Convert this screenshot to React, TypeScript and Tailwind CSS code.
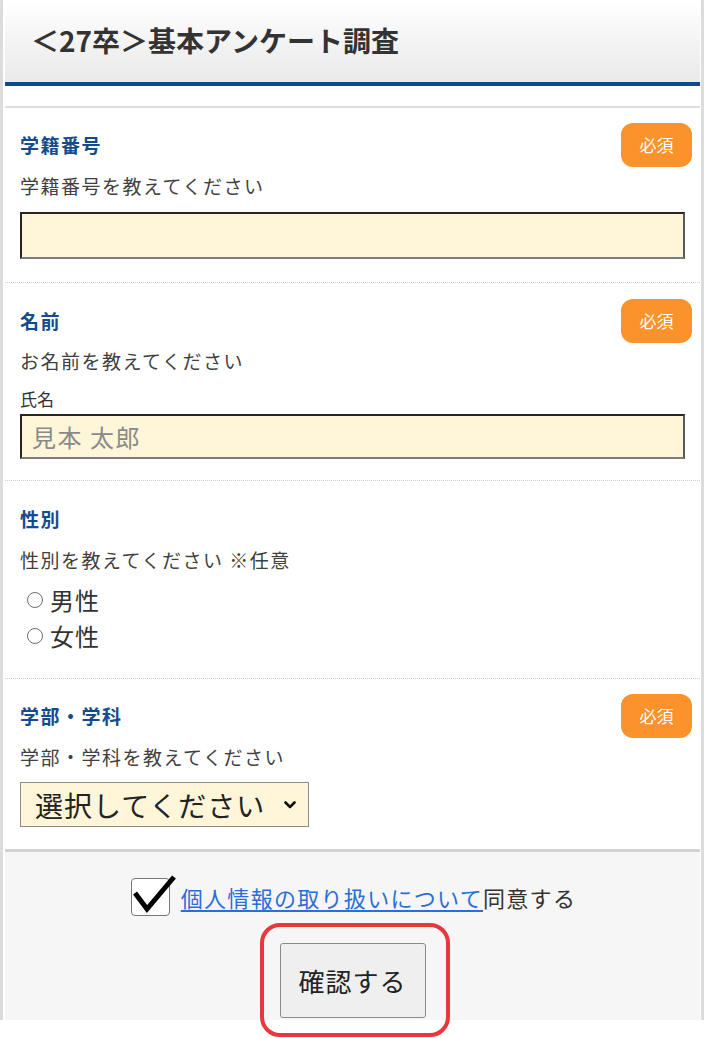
import React from "react";

const Badge = () => (
  <span className="flex h-[44px] w-[71px] items-center justify-center rounded-[12px] bg-[#fb922b] text-[17px] text-white">
    必須
  </span>
);

const Label = ({ children }: { children: React.ReactNode }) => (
  <span className="text-[19px] font-bold leading-[28px] tracking-[1.5px] text-[#134b8c]">{children}</span>
);

const Desc = ({ children, className = "" }: { children: React.ReactNode; className?: string }) => (
  <div className={`text-[19px] leading-[28px] tracking-[1.5px] text-[#404040] ${className}`}>{children}</div>
);

const Radio = ({ label }: { label: string }) => (
  <div className="flex h-[36px] items-center pl-[7px]">
    <span className="mr-[7px] h-[16px] w-[16px] rounded-full border-[1.5px] border-[#6f6f6f] bg-white" />
    <span className="text-[24px] leading-[36px] tracking-[1px] text-[#333]">{label}</span>
  </div>
);

export default function App() {
  return (
    <div className="relative h-[1038px] w-[708px] overflow-hidden bg-white font-['Noto_Sans_CJK_JP','Noto_Sans',sans-serif]">
      <div className="w-[704px] border-x-[3px] border-[#dcdcdc] pl-[2px] pr-[1px]">
        {/* header */}
        <div className="flex h-[82px] items-center bg-gradient-to-b from-[#ffffff] to-[#e9e9e9] pl-[26px] pb-[3px]">
          <h1 className="text-[28px] font-bold tracking-[0px] text-[#333]">＜27卒＞基本アンケート調査</h1>
        </div>
        <div className="h-[4px] bg-[#0b4a8f]" />
        <div className="h-[20px]" />

        {/* section 1 */}
        <div className="border-t-2 border-b border-t-[#dddddd] border-b-[#cfcfcf] border-dotted pl-[15px] pr-[8px] pt-[15px] pb-[23px]" style={{ borderTopStyle: "solid" }}>
          <div className="flex h-[44px] items-center justify-between">
            <Label>学籍番号</Label>
            <Badge />
          </div>
          <Desc className="mt-[5px]">学籍番号を教えてください</Desc>
          <div className="mt-[12px] h-[47px] w-[665px] border-2 border-t-[#262626] border-l-[#262626] border-b-[#7c7c7c] border-r-[#5a5a5a] bg-[#fff5d9]" />
        </div>

        {/* section 2 */}
        <div className="border-b border-dotted border-[#cfcfcf] pl-[15px] pr-[8px] pt-[16px] pb-[21px]">
          <div className="flex h-[44px] items-center justify-between">
            <Label>名前</Label>
            <Badge />
          </div>
          <Desc className="mt-[4px]">お名前を教えてください</Desc>
          <div className="mt-[12px] text-[17px] leading-[24px] text-[#333]">氏名</div>
          <div className="mt-[3px] flex h-[45px] w-[665px] items-center border-2 border-t-[#262626] border-l-[#262626] border-b-[#7c7c7c] border-r-[#5a5a5a] bg-[#fff5d9] pl-[10px]">
            <span className="text-[24px] tracking-[1.5px] text-[#8a8a8a]">見本 太郎</span>
          </div>
        </div>

        {/* section 3 */}
        <div className="border-b border-dotted border-[#cfcfcf] pl-[15px] pr-[8px] pt-[16px] pb-[24px]">
          <div className="flex h-[44px] items-center">
            <Label>性別</Label>
          </div>
          <Desc className="mt-[5px]">性別を教えてください ※任意</Desc>
          <div className="mt-[8px]">
            <Radio label="男性" />
            <Radio label="女性" />
          </div>
        </div>

        {/* section 4 */}
        <div className="border-b-[3px] border-[#d2d2d2] pl-[15px] pr-[8px] pt-[15px] pb-[22px]">
          <div className="flex h-[44px] items-center justify-between">
            <Label>学部・学科</Label>
            <Badge />
          </div>
          <Desc className="mt-[5px]">学部・学科を教えてください</Desc>
          <div className="mt-[11px] flex h-[45px] w-[289px] items-center border border-[#8c8c8c] bg-[#fff5d9] pl-[14px] pr-[12px]">
            <span className="text-[28px] leading-[40px] tracking-[1px] text-[#222]">選択してください</span>
            <svg className="ml-auto" width="12" height="8" viewBox="0 0 12 8">
              <path d="M1.5 1.5 L6 6 L10.5 1.5" fill="none" stroke="#111" strokeWidth="2.6" strokeLinecap="round" strokeLinejoin="round" />
            </svg>
          </div>
        </div>

        {/* footer */}
        <div className="bg-[#f6f6f6] pt-[26px] pb-[2px]">
          <div className="flex h-[38px] items-center justify-center pl-[2px]">
            <span className="relative mr-[11px] h-[38px] w-[39px] rounded-[4px] border-[1.5px] border-[#777] bg-white">
              <svg className="absolute left-[0px] top-[-5px]" width="46" height="40" viewBox="0 0 46 40">
                <path d="M3 19 L15 35 L42 3" fill="none" stroke="#000" strokeWidth="5" strokeLinejoin="miter" />
              </svg>
            </span>
            <span className="text-[22px] leading-[30px] tracking-[1.3px] text-[#333]">
              <span className="text-[#2a6fd8] underline decoration-[1.5px] underline-offset-[3px]">個人情報の取り扱いについて</span>同意する
            </span>
          </div>
          <div className="mt-[27px] flex justify-center">
            <div className="relative">
              <button className="flex h-[75px] w-[146px] items-center justify-center rounded-[3px] border border-[#8a8a8a] bg-[#efefef] text-[26px] tracking-[1px] text-[#222]">
                確認する
              </button>
              <div className="pointer-events-none absolute -left-[20px] -top-[20px] h-[114px] w-[190px] rounded-[20px] border-[4px] border-[#e8383d]" />
            </div>
          </div>
        </div>
      </div>
    </div>
  );
}
